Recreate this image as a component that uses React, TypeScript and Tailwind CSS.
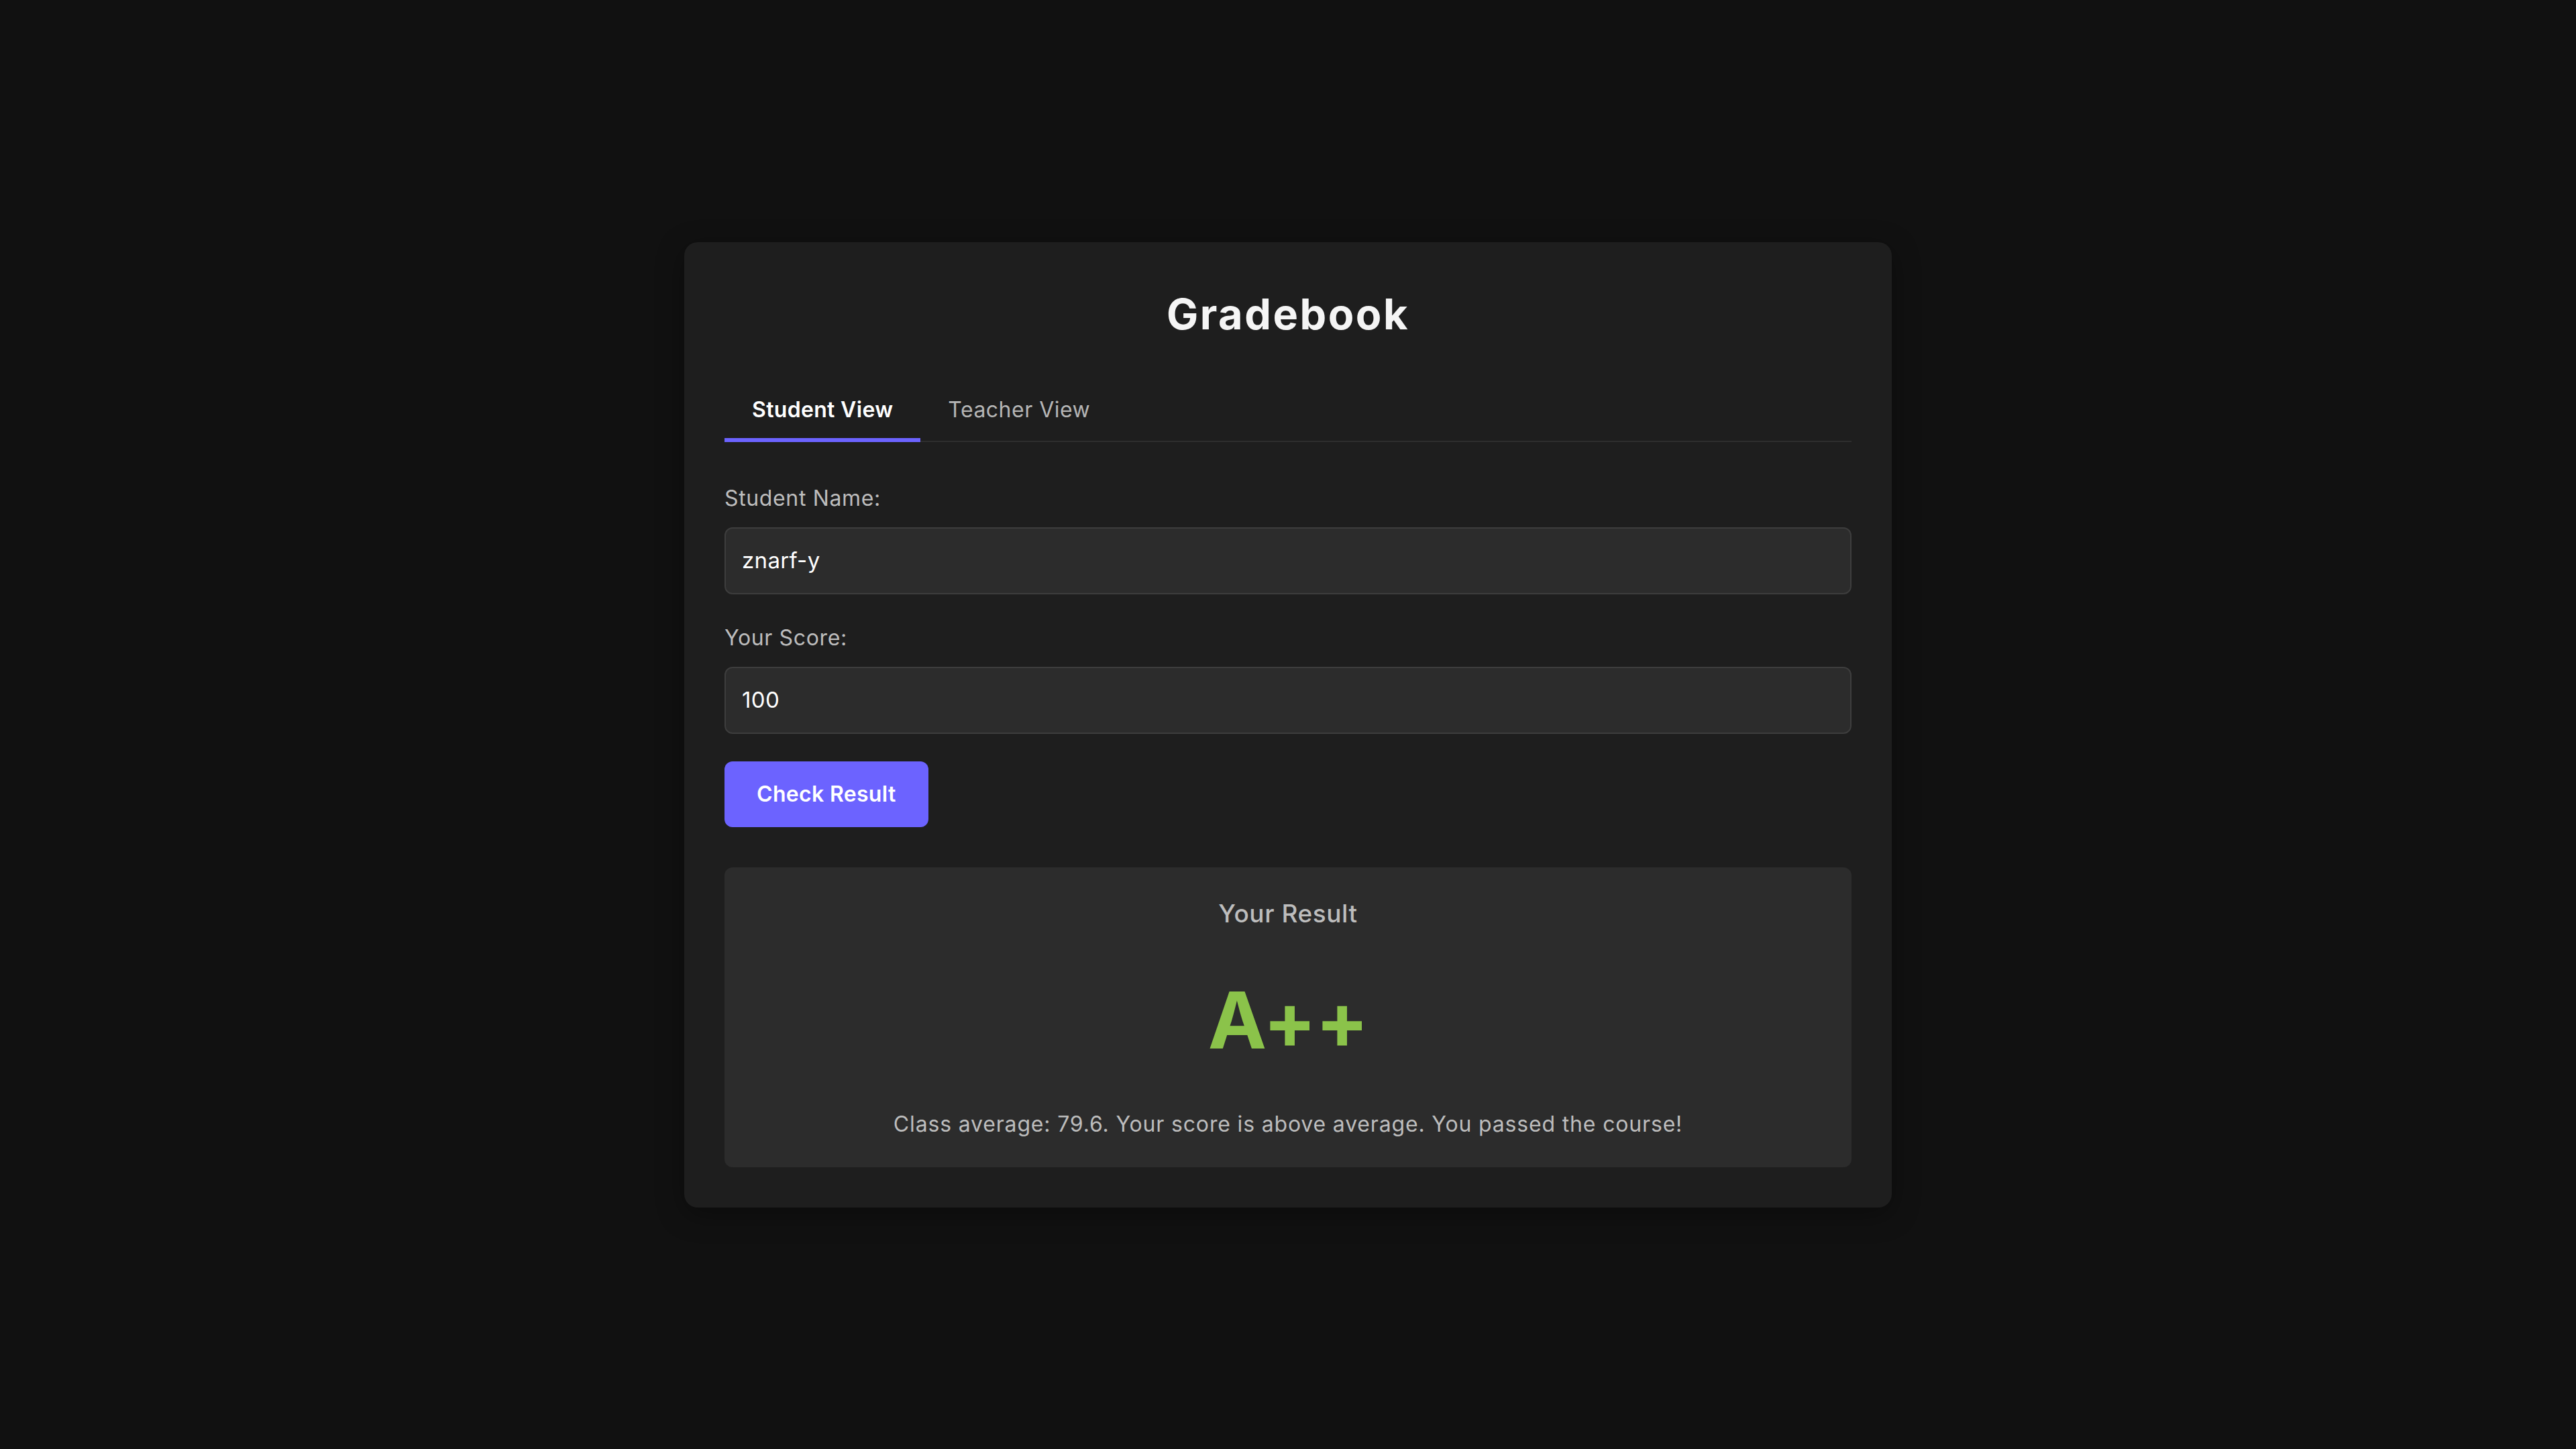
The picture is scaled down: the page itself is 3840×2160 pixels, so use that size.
import { useState } from 'react'

export default function App() {
  const [tab, setTab] = useState<'student' | 'teacher'>('student')
  const [name, setName] = useState('znarf-y')
  const [score, setScore] = useState('100')

  const tabs = [
    { id: 'student' as const, label: 'Student View' },
    { id: 'teacher' as const, label: 'Teacher View' },
  ]

  return (
    <div className="min-h-screen bg-[#111111] flex items-center justify-center font-['Inter',sans-serif]">
      <div className="w-[1800px] bg-[#1e1e1e] rounded-[20px] px-[60px] py-[60px] flex flex-col shadow-[0_10px_40px_rgba(0,0,0,0.35)]">
        <h1 className="text-center text-[63px] leading-[94px] font-bold text-[#f5f5f5] tracking-[0.04em]">
          Gradebook
        </h1>

        <div className="mt-[54px] flex border-b-2 border-[#2e2e2e]">
          {tabs.map((t) => (
            <button
              key={t.id}
              onClick={() => setTab(t.id)}
              className={
                t.id === tab
                  ? 'px-[41px] pt-[22px] pb-[22px] -mb-[2px] border-b-[6px] border-[#6c63ff] text-[32px] leading-[40px] font-semibold text-white tracking-[0.01em]'
                  : 'px-[41px] pt-[22px] pb-[22px] -mb-[2px] border-b-[6px] border-transparent text-[32px] leading-[40px] font-normal text-[#b5b5b5] tracking-[0.015em]'
              }
            >
              {t.label}
            </button>
          ))}
        </div>

        <label className="mt-[64px] text-[32px] leading-[40px] text-[#bdbdbd] tracking-[0.02em]">Student Name:</label>
        <input
          value={name}
          onChange={(e) => setName(e.target.value)}
          className="mt-[23px] h-[100px] w-full rounded-[12px] border-2 border-[#3d3d3d] bg-[#2c2c2c] px-[24px] pb-[2px] text-[33px] text-white outline-none tracking-[0.01em]"
        />

        <label className="mt-[45px] text-[32px] leading-[40px] text-[#bdbdbd] tracking-[0.02em]">Your Score:</label>
        <input
          value={score}
          onChange={(e) => setScore(e.target.value)}
          className="mt-[23px] h-[100px] w-full rounded-[12px] border-2 border-[#3d3d3d] bg-[#2c2c2c] px-[24px] pb-[2px] text-[33px] text-white outline-none tracking-[0.01em]"
        />

        <div className="mt-[41px] flex">
          <button className="h-[98px] px-[48px] rounded-[12px] bg-[#6c63ff] text-white text-[32px] font-semibold tracking-[0.01em]">
            Check Result
          </button>
        </div>

        <div className="mt-[60px] rounded-[12px] bg-[#2c2c2c] pt-[46px] pb-[44px] flex flex-col items-center">
          <h3 className="text-[37px] leading-[46px] font-medium text-[#bdbdbd] tracking-[0.015em]">Your Result</h3>
          <div className="mt-[66px] text-[117px] leading-[140px] font-bold text-[#8bc34a] tracking-[-0.01em]">A++</div>
          <p className="mt-[65px] text-[32px] leading-[40px] text-[#bdbdbd] tracking-[0.026em]">
            Class average: 79.6. Your score is above average. You passed the course!
          </p>
        </div>
      </div>
    </div>
  )
}
